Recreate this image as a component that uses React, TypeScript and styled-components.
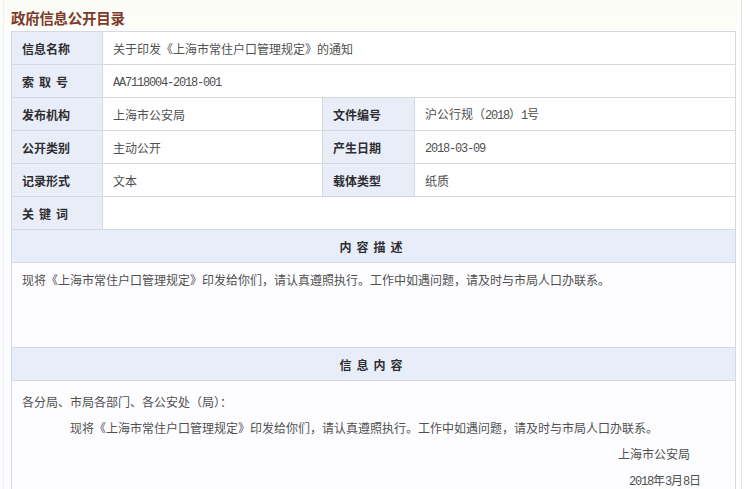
import React from "react";
import styled, { createGlobalStyle } from "styled-components";

const Global = createGlobalStyle`
  html, body { margin: 0; padding: 0; background: #ffffff; }
  body { font-family: "Noto Sans CJK SC", "Noto Sans", sans-serif; }
`;

const Page = styled.div`
  width: 742px;
  height: 489px;
  overflow: hidden;
  border-right: 1px solid #e4e5ea;
  padding-left: 3px;
  box-sizing: border-box;
  background: linear-gradient(to bottom, #fcfcf6 0px, #fdfdf9 28px, #fcfdff 31px, #fcfdff 100%);
`;

const Inner = styled.div`
  border-left: 1px solid #eef0f4;
  padding-left: 7px;
  height: 100%;
`;

const Title = styled.h1`
  margin: 0;
  height: 31px;
  line-height: 35px;
  font-size: 14.5px;
  font-weight: 700;
  color: #7d3a2a;
  letter-spacing: -0.3px;
`;

const Table = styled.table`
  width: 724px;
  border-collapse: collapse;
  table-layout: fixed;
  background: #fdfdff;
  td {
    border: 1px solid #d5d8df;
    font-size: 12px;
    padding: 0;
  }
`;

const Label = styled.td<{ $spaced?: boolean }>`
  height: 32px;
  background: #e9edf7;
  color: #2e2e33;
  font-weight: 700;
  padding-left: 10px !important;
  letter-spacing: ${(p) => (p.$spaced ? "5px" : "0")};
`;

const Value = styled.td`
  height: 32px;
  color: #505050;
  padding-left: 10px !important;
  background: #ffffff;
`;

const Mono = styled.span`
  font-family: "Liberation Mono", monospace;
  font-size: 12px;
  letter-spacing: -1.2px;
`;

const SectionHead = styled.td`
  height: 32px;
  background: #e7edf9;
  text-align: center;
  font-weight: 700;
  color: #2e2e33;
  letter-spacing: 5px;
`;

const Body = styled.td<{ $h: number }>`
  height: ${(p) => p.$h}px;
  vertical-align: top;
  color: #505050;
  background: #fdfdff;
  padding: 0 !important;
`;

const Para = styled.div<{ $indent?: boolean; $right?: number; $top?: number; $lh?: number }>`
  padding-left: ${(p) => (p.$indent ? "58px" : "10px")};
  padding-right: ${(p) => (p.$right ?? 0)}px;
  padding-top: ${(p) => p.$top ?? 0}px;
  text-align: ${(p) => (p.$right !== undefined ? "right" : "left")};
  line-height: ${(p) => p.$lh ?? 26}px;
  font-size: 12px;
  white-space: nowrap;
`;

export default function App() {
  return (
    <>
      <Global />
      <Page>
        <Inner>
          <Title>政府信息公开目录</Title>
          <Table>
            <colgroup>
              <col style={{ width: 91 }} />
              <col style={{ width: 220 }} />
              <col style={{ width: 92 }} />
              <col style={{ width: 321 }} />
            </colgroup>
            <tbody>
              <tr>
                <Label>信息名称</Label>
                <Value colSpan={3}>关于印发《上海市常住户口管理规定》的通知</Value>
              </tr>
              <tr>
                <Label $spaced>索取号</Label>
                <Value colSpan={3}>
                  <Mono>AA7118004-2018-001</Mono>
                </Value>
              </tr>
              <tr>
                <Label>发布机构</Label>
                <Value>上海市公安局</Value>
                <Label>文件编号</Label>
                <Value>
                  沪公行规（<Mono>2018</Mono>）<Mono>1</Mono>号
                </Value>
              </tr>
              <tr>
                <Label>公开类别</Label>
                <Value>主动公开</Value>
                <Label>产生日期</Label>
                <Value>
                  <Mono>2018-03-09</Mono>
                </Value>
              </tr>
              <tr>
                <Label>记录形式</Label>
                <Value>文本</Value>
                <Label>载体类型</Label>
                <Value>纸质</Value>
              </tr>
              <tr>
                <Label $spaced>关键词</Label>
                <Value colSpan={3}></Value>
              </tr>
              <tr>
                <SectionHead colSpan={4}>内容描述</SectionHead>
              </tr>
              <tr>
                <Body colSpan={4} $h={84}>
                  <Para $top={4}>
                    现将《上海市常住户口管理规定》印发给你们，请认真遵照执行。工作中如遇问题，请及时与市局人口办联系。
                  </Para>
                </Body>
              </tr>
              <tr>
                <SectionHead colSpan={4}>信息内容</SectionHead>
              </tr>
              <tr>
                <Body colSpan={4} $h={140}>
                  <Para $top={8}>各分局、市局各部门、各公安处（局）：</Para>
                  <Para $indent>
                    现将《上海市常住户口管理规定》印发给你们，请认真遵照执行。工作中如遇问题，请及时与市局人口办联系。
                  </Para>
                  <Para $right={45}>上海市公安局</Para>
                  <Para $right={34}>
                    <Mono>2018</Mono>年<Mono>3</Mono>月<Mono>8</Mono>日
                  </Para>
                </Body>
              </tr>
            </tbody>
          </Table>
        </Inner>
      </Page>
    </>
  );
}
